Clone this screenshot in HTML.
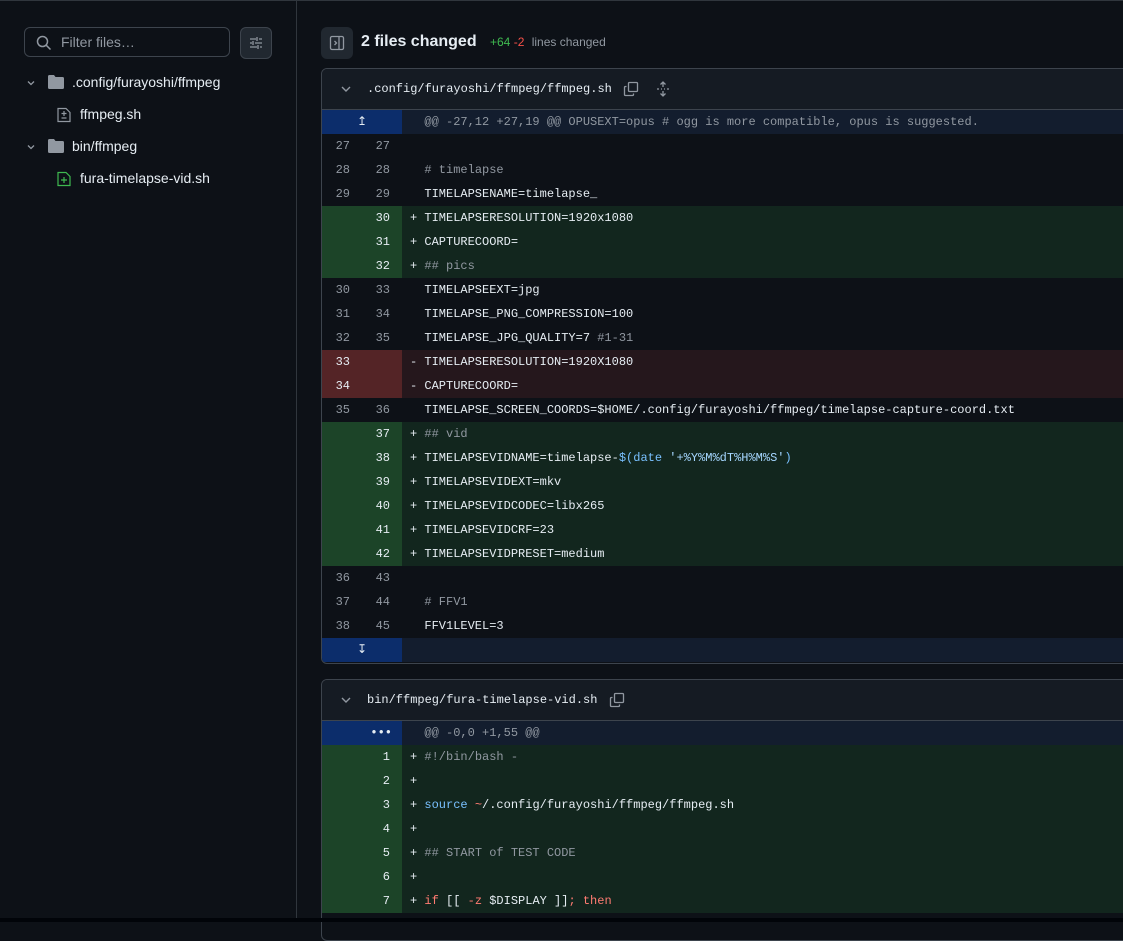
<!DOCTYPE html><html><head><style>
body{margin:0;width:1123px;height:922px;background:#0d1117;overflow:hidden;font-family:"Liberation Sans",sans-serif;color:#e6edf3;position:relative}
.sb{position:absolute;left:0;top:0;width:296px;height:918px;border-right:1px solid #30363d;border-top:1px solid #30363d}
.filter{position:absolute;left:24px;top:26px;width:206px;height:30px;border:1px solid #3d444d;border-radius:6px;box-sizing:border-box}
.filter span{position:absolute;left:36px;top:6px;font-size:14px;color:#9198a1}
.fbtn{position:absolute;left:240px;top:26px;width:32px;height:32px;background:#212830;border:1px solid #3d444d;border-radius:6px;box-sizing:border-box}
.ti{position:absolute;font-size:14px;color:#e6edf3}
.main{position:absolute;left:297px;top:0;right:0;height:918px;border-top:1px solid #30363d}
.card{position:absolute;left:321px;width:820px;border:1px solid #3d444d;border-radius:6px;overflow:hidden;background:#0d1117}
.hd{height:40px;background:#151b23;border-bottom:1px solid #3d444d;position:relative;font-family:"Liberation Mono",monospace;font-size:12px}
.row{height:24px;display:flex;font-family:"Liberation Mono",monospace;font-size:12px;line-height:24px;white-space:pre}
.n{width:40px;text-align:right;padding-right:12px;box-sizing:border-box;color:#9198a1}
.n2{width:40px}
.c{flex:1;padding-left:8px;color:#e6edf3}
.a .n{background:#1c4428;color:#e6edf3}.a .c{background:#12261e}
.d .n{background:#542426;color:#e6edf3}.d .c{background:#25171c}
.h .n{background:#0c2d6b;color:#e6edf3;text-align:center;padding:0}.h .c{background:#131d2e;color:#9198a1}
.cm{color:#9198a1}.bl{color:#79c0ff}.rd{color:#ff7b72}.bl2{color:#a5d6ff}
</style></head><body>
<div class="sb">
<div class="filter"><svg style="position:absolute;left:11px;top:7px" width="16" height="16" viewBox="0 0 16 16"><circle cx="6.5" cy="6.5" r="5" fill="none" stroke="#9198a1" stroke-width="1.5"/><path d="M10.3 10.3L14.5 14.5" stroke="#9198a1" stroke-width="1.5"/></svg><span>Filter files…</span></div>
<div class="fbtn"><svg style="position:absolute;left:7px;top:7px" width="16" height="16" viewBox="0 0 16 16" stroke="#9198a1" stroke-width="1.3" fill="none"><path d="M2 4h6M11 4h3M9 2v4M2 8h2M7 8h7M5 6v4M2 12h7M12 12h2M10 10v4"/></svg></div>
<svg style="position:absolute;left:26px;top:77px" width="10" height="10" viewBox="0 0 10 10"><path d="M2 3.5l3 3 3-3" stroke="#9198a1" stroke-width="1.3" fill="none"/></svg>
<svg style="position:absolute;left:48px;top:74px" width="16" height="14" viewBox="0 0 16 14"><path d="M0 1.5Q0 0 1.5 0H6l1.5 2H14.5Q16 2 16 3.5V12.5Q16 14 14.5 14H1.5Q0 14 0 12.5Z" fill="#9198a1"/></svg>
<div class="ti" style="left:72px;top:73px">.config/furayoshi/ffmpeg</div>
<svg style="position:absolute;left:57px;top:106px" width="14" height="16" viewBox="0 0 14 16" fill="none" stroke="#9198a1" stroke-width="1.2"><path d="M1 1.5h8l4 4V14.5H1Z"/><path d="M7 4v5M4.5 6.5h5M4.5 11h5"/></svg>
<div class="ti" style="left:80px;top:105px">ffmpeg.sh</div>
<svg style="position:absolute;left:26px;top:141px" width="10" height="10" viewBox="0 0 10 10"><path d="M2 3.5l3 3 3-3" stroke="#9198a1" stroke-width="1.3" fill="none"/></svg>
<svg style="position:absolute;left:48px;top:138px" width="16" height="14" viewBox="0 0 16 14"><path d="M0 1.5Q0 0 1.5 0H6l1.5 2H14.5Q16 2 16 3.5V12.5Q16 14 14.5 14H1.5Q0 14 0 12.5Z" fill="#9198a1"/></svg>
<div class="ti" style="left:72px;top:137px">bin/ffmpeg</div>
<svg style="position:absolute;left:57px;top:170px" width="14" height="16" viewBox="0 0 14 16" fill="none" stroke="#3fb950" stroke-width="1.2"><path d="M1 1.5h8l4 4V14.5H1Z"/><path d="M7 6v6M4 9h6"/></svg>
<div class="ti" style="left:80px;top:169px">fura-timelapse-vid.sh</div>
</div>
<div class="main"></div>
<div style="position:absolute;left:321px;top:27px;width:32px;height:32px;background:#212830;border-radius:6px"><svg style="position:absolute;left:8px;top:8px" width="16" height="16" viewBox="0 0 16 16" fill="none" stroke="#9198a1" stroke-width="1.3"><rect x="1.5" y="1.5" width="13" height="13" rx="1.5"/><path d="M10 1.5v13M5.5 6l2 2-2 2"/></svg></div>
<div style="position:absolute;left:361px;top:33px;font-size:16px;font-weight:bold">2 files changed</div>
<div style="position:absolute;left:490px;top:35px;font-size:12px"><span style="color:#3fb950">+64</span> <span style="color:#f85149">-2</span> <span style="color:#9198a1;margin-left:4px">lines changed</span></div>

<div class="card" style="top:68px;height:594px">
<div class="hd"><svg style="position:absolute;left:18px;top:15px" width="12" height="10" viewBox="0 0 12 10"><path d="M2 3l4 4 4-4" stroke="#9198a1" stroke-width="1.4" fill="none"/></svg>
<span style="position:absolute;left:45px;top:13px;color:#e6edf3">.config/furayoshi/ffmpeg/ffmpeg.sh</span>
<svg style="position:absolute;left:301px;top:12px" width="16" height="16" viewBox="0 0 16 16" fill="none" stroke="#9198a1" stroke-width="1.3"><rect x="5.5" y="1.5" width="9" height="9" rx="1"/><path d="M3.5 5.5h-1a1 1 0 0 0-1 1v7a1 1 0 0 0 1 1h7a1 1 0 0 0 1-1v-1"/></svg>
<svg style="position:absolute;left:334px;top:12px" width="14" height="16" viewBox="0 0 14 16" fill="none" stroke="#9198a1" stroke-width="1.3"><path d="M7 1v5M4.5 3.5L7 1l2.5 2.5M7 10v5M4.5 12.5L7 15l2.5-2.5M1 8h2M5 8h1M8 8h1M11 8h2"/></svg></div>
<div class="row h"><div class="n" style="width:80px">↥</div><div class="c">  @@ -27,12 +27,19 @@ OPUSEXT=opus # ogg is more compatible, opus is suggested.</div></div>
<div class="row"><div class="n">27</div><div class="n">27</div><div class="c"> </div></div>
<div class="row"><div class="n">28</div><div class="n">28</div><div class="c">  <span class="cm"># timelapse</span></div></div>
<div class="row"><div class="n">29</div><div class="n">29</div><div class="c">  TIMELAPSENAME=timelapse_</div></div>
<div class="row a"><div class="n"></div><div class="n">30</div><div class="c">+ TIMELAPSERESOLUTION=1920x1080</div></div>
<div class="row a"><div class="n"></div><div class="n">31</div><div class="c">+ CAPTURECOORD=</div></div>
<div class="row a"><div class="n"></div><div class="n">32</div><div class="c">+ <span class="cm">## pics</span></div></div>
<div class="row"><div class="n">30</div><div class="n">33</div><div class="c">  TIMELAPSEEXT=jpg</div></div>
<div class="row"><div class="n">31</div><div class="n">34</div><div class="c">  TIMELAPSE_PNG_COMPRESSION=100</div></div>
<div class="row"><div class="n">32</div><div class="n">35</div><div class="c">  TIMELAPSE_JPG_QUALITY=7 <span class="cm">#1-31</span></div></div>
<div class="row d"><div class="n">33</div><div class="n"></div><div class="c">- TIMELAPSERESOLUTION=1920X1080</div></div>
<div class="row d"><div class="n">34</div><div class="n"></div><div class="c">- CAPTURECOORD=</div></div>
<div class="row"><div class="n">35</div><div class="n">36</div><div class="c">  TIMELAPSE_SCREEN_COORDS=$HOME/.config/furayoshi/ffmpeg/timelapse-capture-coord.txt</div></div>
<div class="row a"><div class="n"></div><div class="n">37</div><div class="c">+ <span class="cm">## vid</span></div></div>
<div class="row a"><div class="n"></div><div class="n">38</div><div class="c">+ TIMELAPSEVIDNAME=timelapse-<span class="bl">$(date </span><span class="bl2">'+%Y%M%dT%H%M%S'</span><span class="bl">)</span></div></div>
<div class="row a"><div class="n"></div><div class="n">39</div><div class="c">+ TIMELAPSEVIDEXT=mkv</div></div>
<div class="row a"><div class="n"></div><div class="n">40</div><div class="c">+ TIMELAPSEVIDCODEC=libx265</div></div>
<div class="row a"><div class="n"></div><div class="n">41</div><div class="c">+ TIMELAPSEVIDCRF=23</div></div>
<div class="row a"><div class="n"></div><div class="n">42</div><div class="c">+ TIMELAPSEVIDPRESET=medium</div></div>
<div class="row"><div class="n">36</div><div class="n">43</div><div class="c"> </div></div>
<div class="row"><div class="n">37</div><div class="n">44</div><div class="c">  <span class="cm"># FFV1</span></div></div>
<div class="row"><div class="n">38</div><div class="n">45</div><div class="c">  FFV1LEVEL=3</div></div>
<div class="row h"><div class="n" style="width:80px">↧</div><div class="c"> </div></div>
</div>

<div class="card" style="top:679px;height:260px">
<div class="hd"><svg style="position:absolute;left:18px;top:15px" width="12" height="10" viewBox="0 0 12 10"><path d="M2 3l4 4 4-4" stroke="#9198a1" stroke-width="1.4" fill="none"/></svg>
<span style="position:absolute;left:45px;top:13px;color:#e6edf3">bin/ffmpeg/fura-timelapse-vid.sh</span>
<svg style="position:absolute;left:287px;top:12px" width="16" height="16" viewBox="0 0 16 16" fill="none" stroke="#9198a1" stroke-width="1.3"><rect x="5.5" y="1.5" width="9" height="9" rx="1"/><path d="M3.5 5.5h-1a1 1 0 0 0-1 1v7a1 1 0 0 0 1 1h7a1 1 0 0 0 1-1v-1"/></svg></div>
<div class="row h"><div class="n" style="width:80px;text-align:right;padding-right:10px;font-weight:bold">•••</div><div class="c">  @@ -0,0 +1,55 @@</div></div>
<div class="row a"><div class="n"></div><div class="n">1</div><div class="c">+ <span class="cm">#!/bin/bash -</span></div></div>
<div class="row a"><div class="n"></div><div class="n">2</div><div class="c">+</div></div>
<div class="row a"><div class="n"></div><div class="n">3</div><div class="c">+ <span class="bl">source</span> <span class="rd">~</span>/.config/furayoshi/ffmpeg/ffmpeg.sh</div></div>
<div class="row a"><div class="n"></div><div class="n">4</div><div class="c">+</div></div>
<div class="row a"><div class="n"></div><div class="n">5</div><div class="c">+ <span class="cm">## START of TEST CODE</span></div></div>
<div class="row a"><div class="n"></div><div class="n">6</div><div class="c">+</div></div>
<div class="row a"><div class="n"></div><div class="n">7</div><div class="c">+ <span class="rd">if</span> [[ <span class="rd">-z</span> $DISPLAY ]]<span class="rd">; then</span></div></div>
</div>
<div style="position:absolute;left:0;top:918px;width:1123px;height:4px;background:#010409"></div>
</body></html>
